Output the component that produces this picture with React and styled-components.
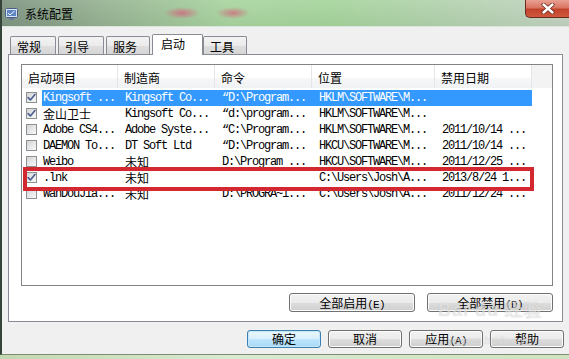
import React from 'react'
import styled, { createGlobalStyle } from 'styled-components'

const GlobalStyle = createGlobalStyle`
  html, body { margin: 0; padding: 0; }
  body {
    width: 569px;
    height: 359px;
    overflow: hidden;
    background: #cfe2bd;
    font-family: "Noto Sans CJK SC", "Liberation Sans", sans-serif;
  }
`

const Page = styled.div`
  width: 569px;
  height: 359px;
  background: linear-gradient(90deg, #c3d8b0, #d8ead0 40%, #cfe3c0);
`

const Window = styled.div`
  box-sizing: border-box;
  width: 569px;
  height: 355px;
  border-left: 2px solid #34443a;
  border-bottom: 1px solid #7d8d74;
  display: flex;
  flex-direction: column;
`

const TitleBar = styled.div`
  box-sizing: border-box;
  height: 27px;
  flex-shrink: 0;
  display: flex;
  align-items: flex-start;
  border-bottom: 1px solid #dde6dc;
  background:
    radial-gradient(ellipse 18px 6px at 180px 13px, rgba(214, 92, 120, 0.75), rgba(214, 92, 120, 0)),
    radial-gradient(ellipse 17px 6px at 231px 13px, rgba(214, 92, 120, 0.7), rgba(214, 92, 120, 0)),
    linear-gradient(180deg, rgba(255, 255, 255, 0.08), rgba(0, 0, 0, 0.04)),
    linear-gradient(90deg, #7f9582 0%, #97b393 18%, #a9d5a0 40%, #a6d59d 58%, #b3d2ae 78%, #c2d3c1 100%);
`

const TitleIcon = styled.svg`
  margin: 8px 0 0 3px;
  flex-shrink: 0;
`

const Title = styled.div`
  margin-left: 7px;
  font-size: 12px;
  line-height: 27px;
  color: #000;
`

const CloseButton = styled.div`
  box-sizing: border-box;
  margin-left: auto;
  width: 44px;
  height: 18px;
  border: 1px solid #6a2a20;
  border-top: none;
  border-right: none;
  border-radius: 0 0 0 5px;
  background: linear-gradient(180deg, #e9a192 0%, #d97562 45%, #c2432c 55%, #d0583c 100%);
  display: flex;
  align-items: center;
  justify-content: center;
`

const Client = styled.div`
  position: relative;
  flex: 1;
  background: #f0f0f0;
  padding-top: 7px;
  display: flex;
  flex-direction: column;
`

const TabStrip = styled.div`
  display: flex;
  align-items: flex-end;
  gap: 2px;
  height: 20px;
  padding-left: 8px;
`

const Tab = styled.div`
  position: relative;
  box-sizing: border-box;
  width: ${p => p.$w}px;
  height: ${p => (p.$active ? 21 : 18)}px;
  margin-bottom: ${p => (p.$active ? -1 : 0)}px;
  margin-right: ${p => (p.$active ? -2 : 0)}px;
  z-index: ${p => (p.$active ? 1 : 0)};
  border: 1px solid #898c95;
  border-bottom: none;
  border-radius: 2px 2px 0 0;
  background: ${p => (p.$active ? '#fff' : 'linear-gradient(180deg, #f3f3f3 0%, #ebebeb 50%, #dedede 51%, #d6d6d6 100%)')};
  padding-left: ${p => (p.$active ? 8 : 6)}px;
  font-size: 12px;
  line-height: ${p => (p.$active ? 17 : 19)}px;
  color: #000;
`

const Panel = styled.div`
  box-sizing: border-box;
  margin-left: 6px;
  width: 555px;
  border: 1px solid #898c95;
  background: #fff;
  padding: 9px 9px 9px 12px;
  display: flex;
  flex-direction: column;
`

const ListWrap = styled.div`
  position: relative;
  width: 532px;
  height: 222px;
`

const ListView = styled.div`
  box-sizing: border-box;
  height: 100%;
  border: 1px solid #838383;
  background: #fff;
`

const Header = styled.div`
  display: flex;
  height: 23px;
  background: linear-gradient(180deg, #ffffff 0%, #ffffff 55%, #f6f7f8 56%, #f1f2f4 100%);
`

const HeaderCell = styled.div`
  box-sizing: border-box;
  width: ${p => (p.$w ? `${p.$w}px` : 'auto')};
  flex: ${p => (p.$w ? '0 0 auto' : 1)};
  border-right: ${p => (p.$w ? '1px solid #e3e5e8' : 'none')};
  background: ${p => (p.$w ? 'transparent' : '#f3f3f3')};
  padding-left: 6px;
  font-size: 12px;
  line-height: 26px;
  color: #000;
`

const Rows = styled.div`
  padding-top: 2px;
`

const Row = styled.div`
  display: flex;
  height: 16px;
`

const CheckCell = styled.div`
  box-sizing: border-box;
  width: 20px;
  padding: 2px 0 0 4px;
`

const CheckBox = styled.div`
  box-sizing: border-box;
  width: 11px;
  height: 11px;
  border: 1px solid #8e8f8f;
  background: linear-gradient(135deg, #d2d4d8 0%, #eaebed 60%, #f7f7f7 100%);
  display: flex;
  align-items: center;
  justify-content: center;
`

const RowBody = styled.div`
  display: grid;
  grid-template-columns: 76px 97px 97px 123px 97px;
  background: ${p => (p.$selected ? '#3399ff' : 'transparent')};
  color: ${p => (p.$selected ? '#fff' : '#000')};
`

const Cell = styled.div`
  box-sizing: border-box;
  padding-left: ${p => (p.$first ? 1 : 7)}px;
  font-family: ${p => (p.$cjk ? '"Noto Sans CJK SC"' : '"Liberation Mono"')}, "Noto Sans CJK SC", monospace;
  font-size: 12px;
  letter-spacing: ${p => (p.$cjk ? 0 : -1.2)}px;
  line-height: 16px;
  white-space: pre;
  overflow: hidden;
`

const Highlight = styled.div`
  position: absolute;
  left: 2px;
  top: 103px;
  width: 511px;
  height: 24px;
  box-sizing: border-box;
  border: 4px solid #d3282f;
  pointer-events: none;
`

const PanelButtons = styled.div`
  display: flex;
  justify-content: flex-end;
  gap: 12px;
  margin-top: 7px;
  width: 532px;
`

const Button = styled.div`
  box-sizing: border-box;
  width: ${p => p.$w}px;
  height: ${p => p.$h}px;
  border: 1px solid ${p => (p.$primary ? '#3c7fb1' : '#707070')};
  border-radius: 3px;
  background: ${p =>
    p.$primary
      ? 'linear-gradient(180deg, #e9f6fd 0%, #d9f0fc 50%, #bee6fd 51%, #a7d9f5 100%)'
      : 'linear-gradient(180deg, #f2f2f2 0%, #ebebeb 50%, #dddddd 51%, #cfcfcf 100%)'};
  box-shadow: ${p => (p.$primary ? 'inset 0 0 0 1px #c5e6f8' : 'inset 0 0 0 1px #fcfcfc')};
  font-size: 12px;
  line-height: ${p => p.$h - 2}px;
  text-align: center;
  color: #000;
`

const Key = styled.span`
  font-family: "Liberation Mono", monospace;
  font-size: 11px;
  letter-spacing: -0.8px;
`

const DialogButtons = styled.div`
  display: flex;
  justify-content: flex-end;
  gap: 7px;
  margin-top: 8px;
  padding-right: 5px;
`

const Watermark = styled.div`
  position: absolute;
  left: 436px;
  top: 274px;
  display: flex;
  flex-direction: column;
  align-items: center;
  pointer-events: none;
  color: rgba(255, 255, 255, 0.5);
  text-shadow: 0 0 1px rgba(120, 120, 120, 0.35);
`

const MarkLogo = styled.div`
  font-family: "Liberation Sans", sans-serif;
  font-size: 18px;
  font-weight: bold;
  line-height: 18px;
  letter-spacing: 1px;
`

const MarkUrl = styled.div`
  margin-top: 16px;
  font-family: "Liberation Sans", sans-serif;
  font-size: 10px;
  line-height: 12px;
`

const tabs = [
  { label: '常规', w: 46 },
  { label: '引导', w: 46 },
  { label: '服务', w: 44 },
  { label: '启动', w: 51, active: true },
  { label: '工具', w: 44 },
]

const columns = [
  { label: '启动项目', w: 96 },
  { label: '制造商', w: 97 },
  { label: '命令', w: 97 },
  { label: '位置', w: 123 },
  { label: '禁用日期', w: 97 },
  { label: '' },
]

const items = [
  { on: true, selected: true, cells: ['Kingsoft ...', 'Kingsoft Co...', '“D:\\Program...', 'HKLM\\SOFTWARE\\M...', ''] },
  { on: true, cells: ['金山卫士', 'Kingsoft Co...', '“d:\\program...', 'HKLM\\SOFTWARE\\M...', ''], cjk: [0] },
  { on: false, cells: ['Adobe CS4...', 'Adobe Syste...', '“C:\\Program...', 'HKLM\\SOFTWARE\\M...', '2011/10/14 ...'] },
  { on: false, cells: ['DAEMON To...', 'DT Soft Ltd', '“D:\\Program...', 'HKCU\\SOFTWARE\\M...', '2011/10/14 ...'] },
  { on: false, cells: ['Weibo', '未知', 'D:\\Program ...', 'HKCU\\SOFTWARE\\M...', '2011/12/25 ...'], cjk: [1] },
  { on: true, cells: ['.lnk', '未知', '', 'C:\\Users\\Josh\\A...', '2013/8/24 1...'], cjk: [1] },
  { on: false, cells: ['WanDouJia...', '未知', 'D:\\PROGRA~1...', 'C:\\Users\\Josh\\A...', '2011/12/24 ...'], cjk: [1] },
]

const Check = () => (
  <svg width="9" height="9" viewBox="0 0 9 9">
    <path d="M1.2 4.6 L3.4 7 L7.9 1.4" fill="none" stroke="#4a5e8c" strokeWidth="1.6" strokeLinecap="round" strokeLinejoin="round" />
  </svg>
)

const Label = ({ text }) => {
  const m = text.match(/^(.*?)(\(.\))$/)
  if (!m) return text
  return (
    <>
      {m[1]}
      <Key>{m[2]}</Key>
    </>
  )
}

export default function App() {
  return (
    <Page>
      <GlobalStyle />
      <Window>
        <TitleBar>
          <TitleIcon width="13" height="13" viewBox="0 0 13 13">
            <rect x="0.5" y="0.5" width="12" height="9" rx="1" fill="#d7e3f2" stroke="#4a5f86" />
            <rect x="2" y="2" width="9" height="6" fill="#5f86c4" />
            <path d="M3 5 L5 7 L9.5 3" fill="none" stroke="#ffffff" strokeWidth="1" />
            <rect x="4" y="10" width="5" height="2" fill="#6a7a90" />
          </TitleIcon>
          <Title>系统配置</Title>
          <CloseButton>
            <svg width="14" height="11" viewBox="0 0 14 11">
              <path d="M2.5 1.5 L11.5 9.5 M11.5 1.5 L2.5 9.5" stroke="#6b2a1c" strokeWidth="4" strokeLinecap="round" />
              <path d="M2.5 1.5 L11.5 9.5 M11.5 1.5 L2.5 9.5" stroke="#ffffff" strokeWidth="2.4" strokeLinecap="round" />
            </svg>
          </CloseButton>
        </TitleBar>
        <Client>
          <TabStrip>
            {tabs.map(t => (
              <Tab key={t.label} $w={t.w} $active={t.active}>
                {t.label}
              </Tab>
            ))}
          </TabStrip>
          <Panel>
            <ListWrap>
              <ListView>
                <Header>
                  {columns.map((c, i) => (
                    <HeaderCell key={i} $w={c.w}>
                      {c.label}
                    </HeaderCell>
                  ))}
                </Header>
                <Rows>
                  {items.map((it, r) => (
                    <Row key={r}>
                      <CheckCell>
                        <CheckBox>{it.on && <Check />}</CheckBox>
                      </CheckCell>
                      <RowBody $selected={it.selected}>
                        {it.cells.map((c, i) => (
                          <Cell key={i} $first={i === 0} $cjk={it.cjk && it.cjk.includes(i)}>
                            {c}
                          </Cell>
                        ))}
                      </RowBody>
                    </Row>
                  ))}
                </Rows>
              </ListView>
              <Highlight />
            </ListWrap>
            <PanelButtons>
              <Button $w={126} $h={19}><Label text="全部启用(E)" /></Button>
              <Button $w={126} $h={19}><Label text="全部禁用(D)" /></Button>
            </PanelButtons>
          </Panel>
          <DialogButtons>
            <Button $w={74} $h={18} $primary>确定</Button>
            <Button $w={74} $h={18}>取消</Button>
            <Button $w={74} $h={18}><Label text="应用(A)" /></Button>
            <Button $w={74} $h={18}>帮助</Button>
          </DialogButtons>
          <Watermark>
            <MarkLogo>Bai du 经验</MarkLogo>
            <MarkUrl>jingyan.baidu.com</MarkUrl>
          </Watermark>
        </Client>
      </Window>
    </Page>
  )
}
